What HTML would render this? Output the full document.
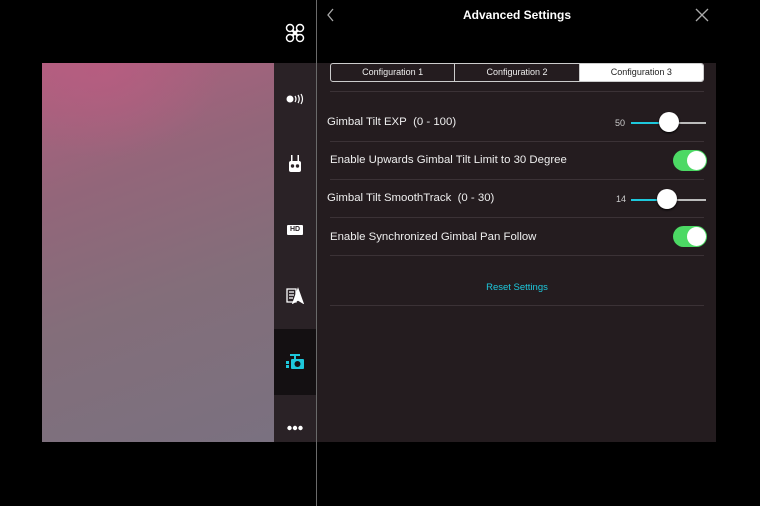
<!DOCTYPE html>
<html><head><meta charset="utf-8"><style>
*{margin:0;padding:0;box-sizing:border-box}
body{width:760px;height:506px;background:#000;position:relative;overflow:hidden;font-family:"Liberation Sans",sans-serif;color:#eee}
.pink{position:absolute;left:42px;top:63px;width:232px;height:379px;background:linear-gradient(160deg,#b0607f 0%,#93667a 30%,#836e7a 60%,#7a7180 100%)}
.pinkglow{position:absolute;left:42px;top:63px;width:232px;height:379px;background:radial-gradient(ellipse 120px 90px at 60px 5px,rgba(190,90,130,.6),rgba(0,0,0,0))}
.side{position:absolute;left:274px;top:63px;width:42px;height:379px;background:#2a2226}
.act{position:absolute;left:274px;top:329px;width:42px;height:66px;background:#141012}
.vline{position:absolute;left:316px;top:0;width:1px;height:506px;background:#6a6a6a}
.panel{position:absolute;left:317px;top:63px;width:399px;height:379px;background:#241c1f}
.title{position:absolute;left:417px;top:8px;width:200px;text-align:center;font-weight:bold;font-size:12px;color:#fff}
.seg{position:absolute;left:330px;top:63px;width:374px;height:19px;border:1px solid #ccc;border-radius:3px;display:flex;font-size:9px;overflow:hidden}
.seg div{flex:1;text-align:center;line-height:17px;color:#eee;border-right:1px solid #ccc}
.seg div:last-child{border:none;background:#fff;color:#222}
.row{position:absolute;left:330px;width:374px;border-top:1px solid #3b3236}
.lbl{position:absolute;font-size:11.4px;color:#eee}
.track{position:absolute;height:2px;background:#bbb}
.knob{position:absolute;width:20px;height:20px;border-radius:50%;background:#fff;box-shadow:0 1px 2px #000}
.tog{position:absolute;width:34px;height:21px;border-radius:11px;background:#4cd964}
.tog i{position:absolute;right:1px;top:1px;width:19px;height:19px;border-radius:50%;background:#fff}
.num{position:absolute;font-size:9px;color:#ccc}
</style></head><body>
<div class="pink"></div><div class="pinkglow"></div>
<div class="side"></div><div class="act"></div>
<div class="vline"></div>
<div class="panel"></div>
<svg style="position:absolute;left:326px;top:8px" width="10" height="14"><path d="M7 1L2 7l5 6" stroke="#aaa" stroke-width="1.3" fill="none"/></svg>
<div class="title">Advanced Settings</div>
<svg style="position:absolute;left:695px;top:8px" width="14" height="14"><path d="M1 1L13 13M13 1L1 13" stroke="#aaa" stroke-width="1.3"/></svg>
<svg style="position:absolute;left:285px;top:23px" width="20" height="20" fill="none" stroke="#fff" stroke-width="1.5"><circle cx="5" cy="5" r="3.5"/><circle cx="15" cy="5" r="3.5"/><circle cx="5" cy="15" r="3.5"/><circle cx="15" cy="15" r="3.5"/><path d="M7 7L13 13M13 7L7 13" stroke-width="2.5"/></svg>
<svg style="position:absolute;left:286px;top:93px" width="20" height="12" fill="none" stroke="#fff" stroke-width="1.2"><circle cx="4" cy="6" r="3.5" fill="#fff" stroke="none"/><path d="M9 3q2 3 0 6M12 2q2.5 4 0 8M15 1q3 5 0 10"/></svg>
<svg style="position:absolute;left:288px;top:155px" width="14" height="18" fill="#fff"><rect x="3" y="0" width="1.5" height="6"/><rect x="9.5" y="0" width="1.5" height="6"/><rect x="1" y="6" width="12" height="11" rx="2"/><circle cx="4.5" cy="11" r="1.7" fill="#2a2226"/><circle cx="9.5" cy="11" r="1.7" fill="#2a2226"/></svg>
<div style="position:absolute;left:287px;top:225px;width:16px;height:10px;background:#fff;border-radius:1px;color:#2a2226;font-size:7px;font-weight:bold;text-align:center;line-height:10px">HD</div>
<svg style="position:absolute;left:286px;top:287px" width="18" height="17" fill="none" stroke="#fff" stroke-width="1.3"><path d="M1 2h9v13H1z M3 5h5M3 8h5M3 11h4"/><path d="M12 2L17 16L12 13L7 16Z" fill="#fff"/></svg>
<svg style="position:absolute;left:286px;top:354px" width="18" height="15" fill="#1ec8dc"><rect x="4" y="0" width="10" height="2"/><rect x="8" y="2" width="2" height="3"/><rect x="0" y="7" width="3" height="3"/><rect x="0" y="11" width="3" height="3"/><rect x="5" y="5" width="13" height="10" rx="1"/><circle cx="11.5" cy="10" r="3" fill="#141012"/></svg>
<svg style="position:absolute;left:287px;top:425px" width="16" height="6" fill="#fff"><circle cx="2.5" cy="3" r="2.2"/><circle cx="8" cy="3" r="2.2"/><circle cx="13.5" cy="3" r="2.2"/></svg>

<div class="seg"><div>Configuration 1</div><div>Configuration 2</div><div>Configuration 3</div></div>

<div class="row" style="top:91px"></div>
<div class="lbl" style="left:327px;top:116px">Gimbal Tilt EXP&nbsp; (0 - 100)</div>
<div class="num" style="left:615px;top:118px">50</div>
<div class="track" style="left:631px;top:122px;width:75px"></div>
<div class="track" style="left:631px;top:122px;width:38px;background:#1ec8dc"></div>
<div class="knob" style="left:659px;top:112px"></div>

<div class="row" style="top:141px"></div>
<div class="lbl" style="left:330px;top:154px">Enable Upwards Gimbal Tilt Limit to 30 Degree</div>
<div class="tog" style="left:673px;top:150px"><i></i></div>

<div class="row" style="top:179px"></div>
<div class="lbl" style="left:327px;top:192px">Gimbal Tilt SmoothTrack&nbsp; (0 - 30)</div>
<div class="num" style="left:616px;top:194px">14</div>
<div class="track" style="left:631px;top:199px;width:75px"></div>
<div class="track" style="left:631px;top:199px;width:36px;background:#1ec8dc"></div>
<div class="knob" style="left:657px;top:189px"></div>

<div class="row" style="top:217px"></div>
<div class="lbl" style="left:330px;top:231px">Enable Synchronized Gimbal Pan Follow</div>
<div class="tog" style="left:673px;top:226px"><i></i></div>

<div class="row" style="top:255px"></div>
<div style="position:absolute;left:330px;width:374px;top:282px;text-align:center;font-size:9.5px;color:#1ec8dc">Reset Settings</div>
<div class="row" style="top:305px"></div>
</body></html>
